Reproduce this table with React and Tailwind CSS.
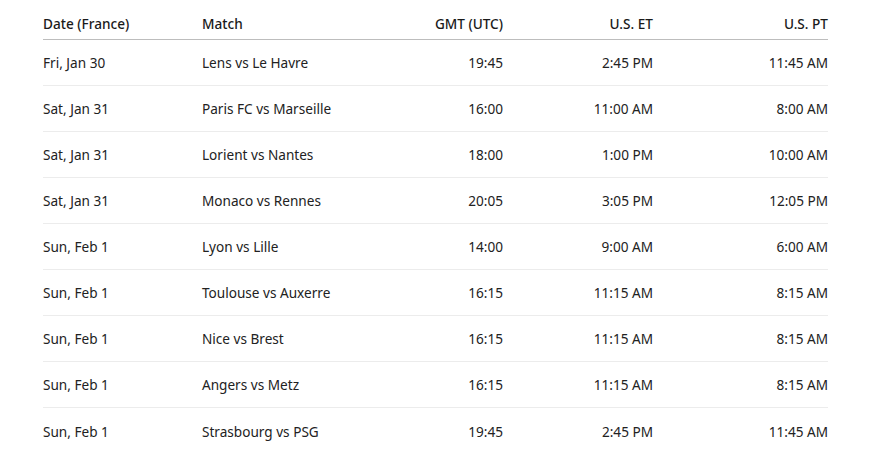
import React from 'react';

const rows = [
    ['Fri, Jan 30', 'Lens vs Le Havre', '19:45', '2:45 PM', '11:45 AM'],
    ['Sat, Jan 31', 'Paris FC vs Marseille', '16:00', '11:00 AM', '8:00 AM'],
    ['Sat, Jan 31', 'Lorient vs Nantes', '18:00', '1:00 PM', '10:00 AM'],
    ['Sat, Jan 31', 'Monaco vs Rennes', '20:05', '3:05 PM', '12:05 PM'],
    ['Sun, Feb 1', 'Lyon vs Lille', '14:00', '9:00 AM', '6:00 AM'],
    ['Sun, Feb 1', 'Toulouse vs Auxerre', '16:15', '11:15 AM', '8:15 AM'],
    ['Sun, Feb 1', 'Nice vs Brest', '16:15', '11:15 AM', '8:15 AM'],
    ['Sun, Feb 1', 'Angers vs Metz', '16:15', '11:15 AM', '8:15 AM'],
    ['Sun, Feb 1', 'Strasbourg vs PSG', '19:45', '2:45 PM', '11:45 AM'],
];

const cols = 'grid grid-cols-[159px_181px_120px_150px_175px]';

export default function App() {
    return (
        <div className="min-h-screen bg-white text-[#222222] font-['Noto_Sans','Open_Sans',sans-serif] text-[13.6px] pl-[43px] pt-[9px]">
            <div className="w-[785px]">
                {/* header */}
                <div className={`${cols} h-[31px] items-center border-b border-[#bdbdbd] font-medium text-[#1a1a1a]`}>
                    <div>Date (France)</div>
                    <div>Match</div>
                    <div className="text-right">GMT (UTC)</div>
                    <div className="text-right">U.S. ET</div>
                    <div className="text-right">U.S. PT</div>
                </div>
                {rows.map((r, i) => (
                    <div key={i} className={`${cols} h-[46px] pt-[2px] items-center ${i < rows.length - 1 ? 'border-b border-[#ececec]' : ''}`}>
                        <div>{r[0]}</div>
                        <div>{r[1]}</div>
                        <div className="text-right">{r[2]}</div>
                        <div className="text-right">{r[3]}</div>
                        <div className="text-right">{r[4]}</div>
                    </div>
                ))}
            </div>
        </div>
    );
}
